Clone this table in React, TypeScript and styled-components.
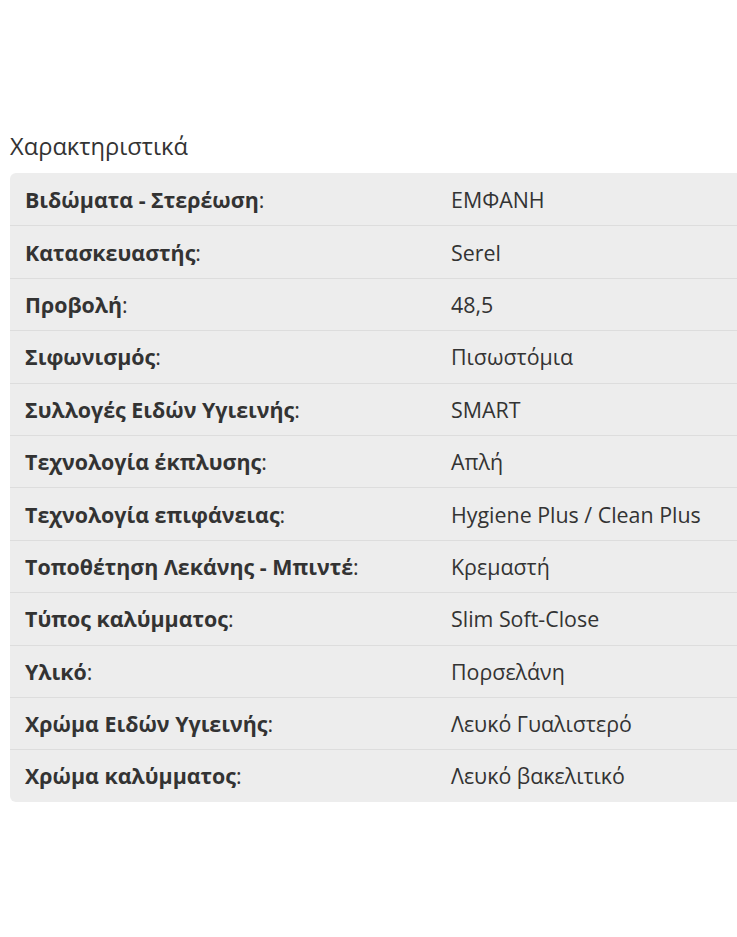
import React from "react";
import styled, { createGlobalStyle } from "styled-components";

const Global = createGlobalStyle`
  html, body { margin: 0; padding: 0; background: #fff; overflow: hidden; }
  body { font-family: "Open Sans", "Noto Sans", sans-serif; color: #333; }
`;

const Page = styled.div`
  padding: 131px 0 0 10px;
  width: 900px;
`;

const Title = styled.h3`
  margin: 0 0 12px 0;
  font-size: 23.7px;
  font-weight: 400;
  line-height: 30px;
  color: #333;
`;

const Table = styled.div`
  background: #ededed;
  border-radius: 6px;
  width: 880px;
  overflow: hidden;
`;

const Row = styled.div`
  display: grid;
  grid-template-columns: 441px 1fr;
  height: 52.4px;
  align-items: center;
  box-sizing: border-box;
  border-top: 1px solid #dddddd;
  &:first-child { border-top: none; }
`;

const Label = styled.div`
  padding-left: 15px;
  font-size: 21.4px;
  color: #333;
  b { font-weight: 700; }
`;

const Value = styled.div`
  font-size: 21.4px;
  color: #333;
`;

const rows: [string, string][] = [
  ["Βιδώματα - Στερέωση", "ΕΜΦΑΝΗ"],
  ["Κατασκευαστής", "Serel"],
  ["Προβολή", "48,5"],
  ["Σιφωνισμός", "Πισωστόμια"],
  ["Συλλογές Ειδών Υγιεινής", "SMART"],
  ["Τεχνολογία έκπλυσης", "Απλή"],
  ["Τεχνολογία επιφάνειας", "Hygiene Plus / Clean Plus"],
  ["Τοποθέτηση Λεκάνης - Μπιντέ", "Κρεμαστή"],
  ["Τύπος καλύμματος", "Slim Soft-Close"],
  ["Υλικό", "Πορσελάνη"],
  ["Χρώμα Ειδών Υγιεινής", "Λευκό Γυαλιστερό"],
  ["Χρώμα καλύμματος", "Λευκό βακελιτικό"],
];

export default function App() {
  return (
    <>
      <Global />
      <Page>
        <Title>Χαρακτηριστικά</Title>
        <Table>
          {rows.map(([k, v]) => (
            <Row key={k}>
              <Label>
                <b>{k}</b>:
              </Label>
              <Value>{v}</Value>
            </Row>
          ))}
        </Table>
      </Page>
    </>
  );
}
